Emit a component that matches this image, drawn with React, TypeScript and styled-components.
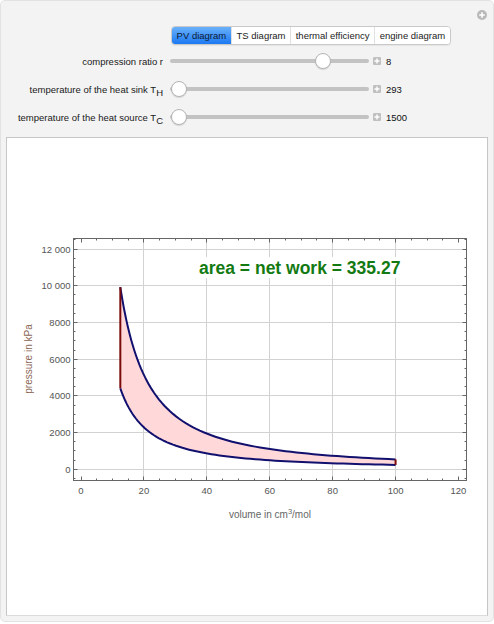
import styled, { createGlobalStyle } from 'styled-components'

const GlobalStyle = createGlobalStyle`
  html, body {
    margin: 0;
    padding: 0;
    background: #ffffff;
  }
  body {
    font-family: "Liberation Sans", Arial, sans-serif;
  }
`

type Control = {
  label: string
  sub?: string
  value: string
  frac: number
}

const controls: Control[] = [
  { label: 'compression ratio r', value: '8', frac: 0.794 },
  { label: 'temperature of the heat sink T', sub: 'H', value: '293', frac: 0 },
  { label: 'temperature of the heat source T', sub: 'C', value: '1500', frac: 0 },
]

const tabs = ['PV diagram', 'TS diagram', 'thermal efficiency', 'engine diagram']

// plot mapping (page coordinates, the svg viewBox is offset to match)
const X = (v: number) => 81 + v * 3.1457
const Y = (p: number) => 469.3 - p * 0.01835
const crisp = (n: number) => Math.round(n - 0.5) + 0.5

const top = (v: number) => 540 * Math.pow(100 / v, 1.4)
const bottom = (v: number) => 240 * Math.pow(100 / v, 1.4)

function sample(f: (v: number) => number, from: number, to: number) {
  const pts: string[] = []
  const n = 80
  for (let i = 0; i <= n; i++) {
    const t = i / n
    // denser near the small volume end
    const v = from + (to - from) * (from < to ? t * t : 1 - (1 - t) * (1 - t))
    pts.push(`${X(v).toFixed(2)},${Y(f(v)).toFixed(2)}`)
  }
  return pts
}

const topPts = sample(top, 12.5, 100)
const botPts = sample(bottom, 100, 12.5)
const fillPath = `M${topPts.join(' L')} L${botPts.join(' L')} Z`
const topPath = `M${topPts.join(' L')}`
const botPath = `M${botPts.join(' L')}`

const frame = { l: 73.5, r: 466.5, t: 238.5, b: 480.5 }

function Plot() {
  const xMinor: number[] = []
  for (let v = 0; v <= 120; v += 5) xMinor.push(v)
  const yMinor: number[] = []
  for (let p = -500; p <= 12500; p += 500) yMinor.push(p)
  const xGrid = [20, 40, 60, 80, 100]
  const yGrid = [0, 2000, 4000, 6000, 8000, 10000, 12000]
  const xLabels = [0, 20, 40, 60, 80, 100, 120]
  const yLabels: [number, string][] = [
    [12000, '12 000'],
    [10000, '10 000'],
    [8000, '8000'],
    [6000, '6000'],
    [4000, '4000'],
    [2000, '2000'],
    [0, '0'],
  ]

  return (
    <Chart viewBox="7 138 480 477" width={480} height={477}>
      {xGrid.map(v => (
        <line key={'gx' + v} x1={crisp(X(v))} x2={crisp(X(v))} y1={frame.t} y2={frame.b} stroke="#d2d2d2" />
      ))}
      {yGrid.map(p => (
        <line key={'gy' + p} x1={frame.l} x2={frame.r} y1={crisp(Y(p))} y2={crisp(Y(p))} stroke="#d2d2d2" />
      ))}

      <path d={fillPath} fill="#ffd9da" stroke="none" />
      <path d={topPath} fill="none" stroke="#12106e" strokeWidth={2} />
      <path d={botPath} fill="none" stroke="#12106e" strokeWidth={2} />
      <line x1={X(12.5)} x2={X(12.5)} y1={Y(top(12.5))} y2={Y(bottom(12.5))} stroke="#7a0a0a" strokeWidth={2} />
      <line x1={X(100)} x2={X(100)} y1={Y(top(100))} y2={Y(bottom(100))} stroke="#7a0a0a" strokeWidth={2} />

      <rect x={frame.l} y={frame.t} width={frame.r - frame.l} height={frame.b - frame.t} fill="none" stroke="#666" />

      {xMinor.map(v => {
        const len = v % 20 === 0 ? 4 : 2
        const x = crisp(X(v))
        return (
          <g key={'tx' + v}>
            <line x1={x} x2={x} y1={frame.b} y2={frame.b - len} stroke="#666" />
            <line x1={x} x2={x} y1={frame.t} y2={frame.t + len} stroke="#666" />
          </g>
        )
      })}
      {yMinor.map(p => {
        const len = p % 2000 === 0 ? 4 : 2
        const y = crisp(Y(p))
        return (
          <g key={'ty' + p}>
            <line x1={frame.l} x2={frame.l + len} y1={y} y2={y} stroke="#666" />
            <line x1={frame.r} x2={frame.r - len} y1={y} y2={y} stroke="#666" />
          </g>
        )
      })}

      {xLabels.map(v => (
        <TickText key={'lx' + v} x={X(v)} y={494} textAnchor="middle">
          {v}
        </TickText>
      ))}
      {yLabels.map(([p, s]) => (
        <TickText key={'ly' + p} x={70.5} y={Y(p) + 3.4} textAnchor="end">
          {s}
        </TickText>
      ))}

      <AxisText x={270} y={518} textAnchor="middle" fill="#666">
        volume in cm
        <tspan dy={-4} fontSize={7.5}>
          3
        </tspan>
        <tspan dy={4}>/mol</tspan>
      </AxisText>
      <AxisText x={0} y={0} textAnchor="middle" fill="#8a6656" transform="translate(32 359) rotate(-90)">
        pressure in kPa
      </AxisText>

      <rect x={196} y={257} width={210} height={21} fill="#ffffff" />
      <AreaText x={199} y={273.5}>
        area = net work = 335.27
      </AreaText>
    </Chart>
  )
}

export default function App() {
  return (
    <>
      <GlobalStyle />
      <Panel>
        <AddButton>
          <svg width="10" height="10" viewBox="0 0 10 10">
            <circle cx="5" cy="5" r="5" fill="#b9b9b9" />
            <path d="M5 2.2v5.6M2.2 5h5.6" stroke="#fff" strokeWidth="1.6" />
          </svg>
        </AddButton>
        <TabBar>
          {tabs.map((t, i) => (
            <Tab key={t} active={i === 0}>
              {t}
            </Tab>
          ))}
        </TabBar>
        <Controls>
          {controls.map(c => (
            <ControlRow key={c.label}>
              <ControlLabel>
                {c.label}
                {c.sub && <Sub>{c.sub}</Sub>}
              </ControlLabel>
              <Slider>
                <Track />
                <Thumb style={{ left: `calc(${c.frac * 100}% - ${c.frac * 18}px + 1px)` }} />
              </Slider>
              <StepBox>
                <svg width="8" height="8" viewBox="0 0 8 8">
                  <path d="M4 1.5v5M1.5 4h5" stroke="#fff" strokeWidth="1.4" />
                </svg>
              </StepBox>
              <ValueText>{c.value}</ValueText>
            </ControlRow>
          ))}
        </Controls>
        <PlotPanel>
          <Plot />
        </PlotPanel>
      </Panel>
    </>
  )
}

const Panel = styled.div`
  position: relative;
  box-sizing: border-box;
  width: 494px;
  height: 622px;
  padding: 25px 5px 5px 5px;
  background: #f3f3f3;
  border: 1px solid #e2e2e2;
  border-radius: 5px;
  font-size: 9.5px;
  color: #1a1a1a;
`
const AddButton = styled.div`
  position: absolute;
  top: 9px;
  right: 6px;
  width: 10px;
  height: 10px;
  line-height: 0;
`
const TabBar = styled.div`
  display: flex;
  box-sizing: border-box;
  height: 19px;
  margin-left: 165px;
  width: max-content;
  background: #ffffff;
  border: 1px solid #c9c9c9;
  border-radius: 4px;
  overflow: hidden;
  box-shadow: 0 1px 1px rgba(0, 0, 0, 0.06);
`
const Tab = styled.div<{ active?: boolean }>`
  display: flex;
  align-items: center;
  padding: 0 4.6px;
  font-size: 9.5px;
  border-left: 1px solid ${p => (p.active ? 'transparent' : '#e0e0e0')};
  background: ${p => (p.active ? 'linear-gradient(#69b1fb, #1c79f2)' : '#ffffff')};
  color: ${p => (p.active ? '#0d1a33' : '#1b1b1b')};
  &:first-child {
    border-left: none;
  }
`
const Controls = styled.div`
  margin-top: 2px;
`
const ControlRow = styled.div`
  display: flex;
  align-items: center;
  height: 28px;
`
const ControlLabel = styled.div`
  width: 157px;
  text-align: right;
  white-space: nowrap;
  font-size: 9.5px;
  color: #1a1a1a;
`
const Sub = styled.sub`
  font-size: 9.5px;
  vertical-align: -3px;
  line-height: 0;
`
const Slider = styled.div`
  position: relative;
  width: 199px;
  height: 16px;
  margin-left: 7px;
  display: flex;
  align-items: center;
`
const Track = styled.div`
  width: 100%;
  height: 4px;
  border-radius: 2px;
  background: #c3c3c3;
`
const Thumb = styled.div`
  position: absolute;
  top: 0;
  box-sizing: border-box;
  width: 16px;
  height: 16px;
  border-radius: 50%;
  background: #ffffff;
  border: 1px solid #b4b4b4;
  box-shadow: 0 1px 1px rgba(0, 0, 0, 0.12);
`
const StepBox = styled.div`
  width: 8px;
  height: 8px;
  margin-left: 4px;
  background: #c0c0c0;
  border-radius: 1px;
  line-height: 0;
`
const ValueText = styled.div`
  margin-left: 5px;
  font-size: 9.5px;
  color: #111;
`
const PlotPanel = styled.div`
  box-sizing: border-box;
  width: 482px;
  height: 479px;
  margin-top: 6px;
  background: #ffffff;
  border: 1px solid #c6c6c6;
  border-bottom-color: #dcdcdc;
`
const Chart = styled.svg`
  display: block;
  font-family: "Liberation Sans", Arial, sans-serif;
`
const TickText = styled.text`
  font-size: 9.5px;
  fill: #555;
`
const AxisText = styled.text`
  font-size: 10px;
`
const AreaText = styled.text`
  font-size: 17.5px;
  font-weight: bold;
  fill: #137a13;
`
